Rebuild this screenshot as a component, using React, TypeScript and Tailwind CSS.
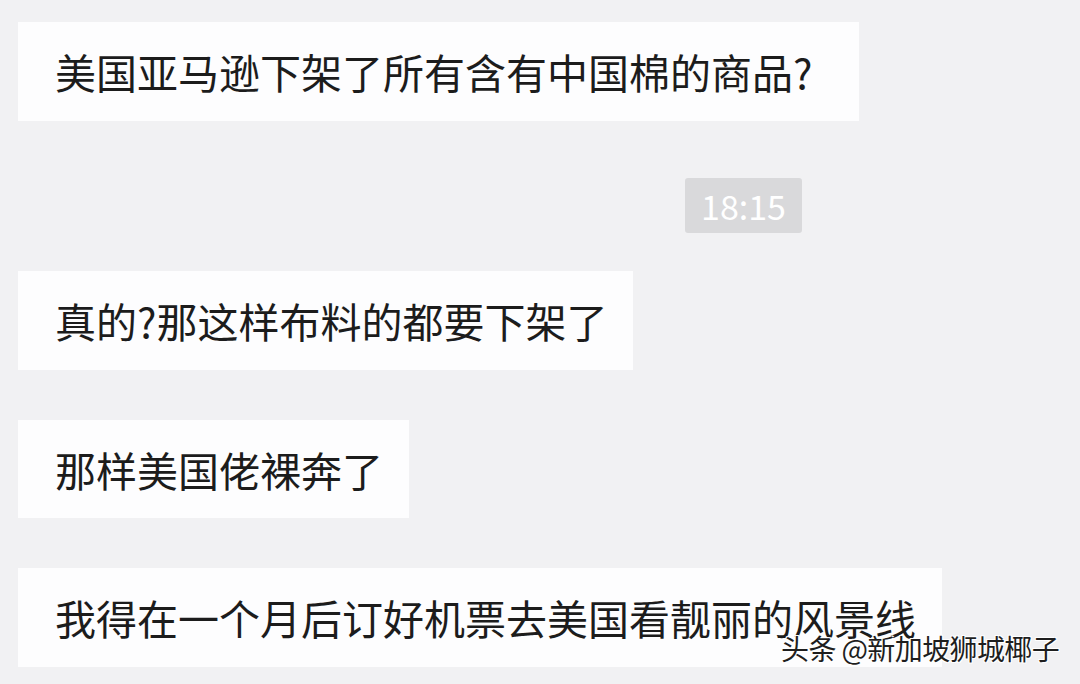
import React from "react";

const font = { fontFamily: '"Noto Sans CJK SC", "Noto Sans", sans-serif' };

function Bubble({ text, w, h }: { text: string; w: string; h: string }) {
  return (
    <div className={`relative flex items-center bg-[#fdfdfe] pl-[37px] ${w} ${h}`}>
      <span className="text-[41px] leading-none text-[#1c1c1c] whitespace-nowrap">{text}</span>
    </div>
  );
}

export default function App() {
  return (
    <div
      className="relative w-[1080px] h-[684px] overflow-hidden bg-[#f1f1f3]"
      style={font}
    >
      <div className="flex flex-col items-start pt-[22px] pl-[18px]">
        <Bubble text="美国亚马逊下架了所有含有中国棉的商品?" w="w-[841px]" h="h-[99px]" />
        <div className="ml-[667px] mt-[57px] flex h-[55px] w-[117px] items-center justify-center rounded-[3px] bg-[#d9d9db]">
          <span className="text-[34px] leading-none text-white">18:15</span>
        </div>
        <div className="mt-[38px]">
          <Bubble text="真的?那这样布料的都要下架了" w="w-[615px]" h="h-[99px]" />
        </div>
        <div className="mt-[50px]">
          <Bubble text="那样美国佬裸奔了" w="w-[391px]" h="h-[98px]" />
        </div>
        <div className="mt-[50px]">
          <Bubble text="我得在一个月后订好机票去美国看靓丽的风景线" w="w-[924px]" h="h-[99px]" />
        </div>
      </div>
      <div
        className="absolute left-[781px] top-[634px] text-[28px] leading-none text-[#1e1e1e] whitespace-nowrap tracking-[-0.6px]"
        style={{
          textShadow:
            "1px 1px 0 #fff, -1px -1px 0 #fff, 1px -1px 0 #fff, -1px 1px 0 #fff",
        }}
      >
        头条 @新加坡狮城椰子
      </div>
    </div>
  );
}
